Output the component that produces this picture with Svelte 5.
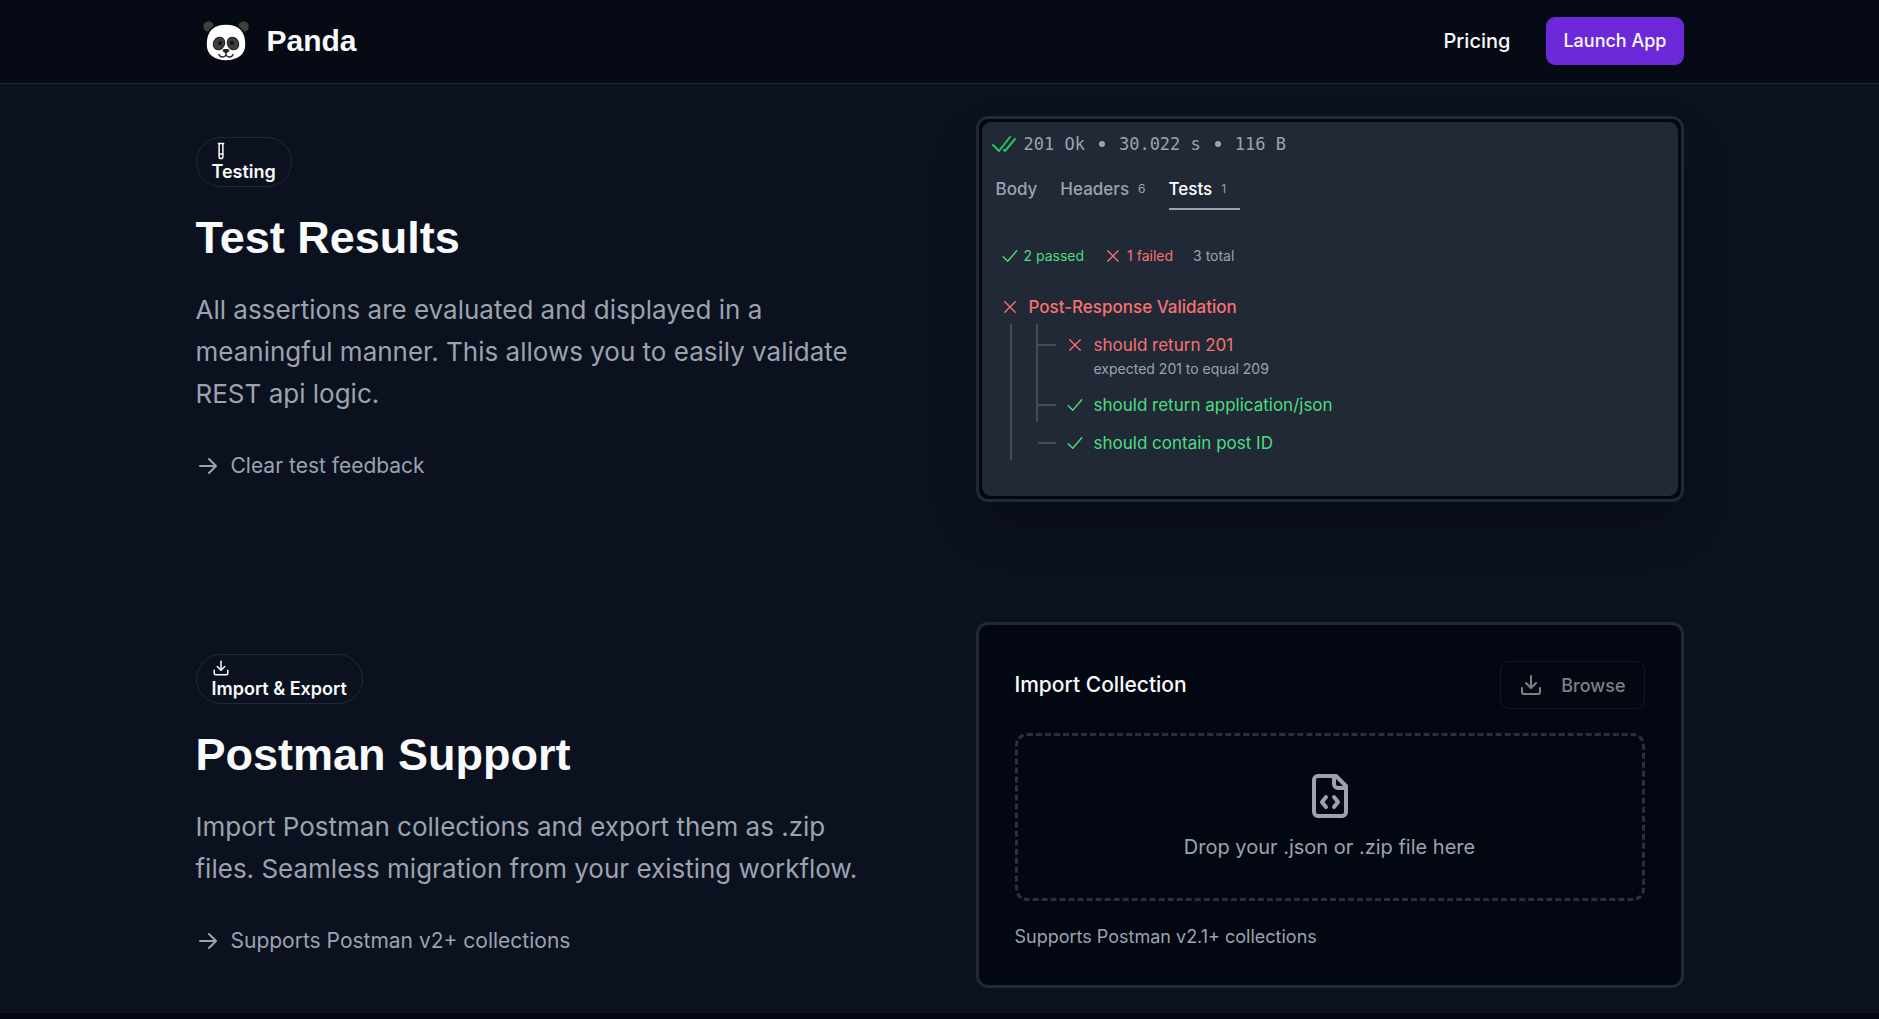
<script>
  const download = ['M12 15V3', 'M7 10l5 5 5-5', 'M21 15v4a2 2 0 0 1-2 2H5a2 2 0 0 1-2-2v-4'];
  const testTube = ['M14.5 2v17.5c0 1.4-1.1 2.5-2.5 2.5s-2.5-1.1-2.5-2.5V2', 'M8.5 2h7', 'M14.5 16h-5'];
  const check = ['M3 13l6 6L21 5'];
  const cross = ['M19 5 5 19', 'M5 5l14 14'];
</script>

{#snippet icon(paths, cls)}
  <svg class="icon {cls}" viewBox="0 0 24 24" aria-hidden="true">
    {#each paths as d}<path {d} />{/each}
  </svg>
{/snippet}

{#snippet copy(iconPaths, tag, title, text, note)}
  <div class="copy">
    <div class="pill">{@render icon(iconPaths, 'i18')}<span>{tag}</span></div>
    <h2>{title}</h2>
    <p class="lead">{text}</p>
    <p class="note">
      {@render icon(['M4 12h15', 'M13 5l7 7-7 7'], 'i24')}
      {note}
    </p>
  </div>
{/snippet}

<header>
  <div class="wrap bar">
    <a class="brand" href="/">
      <svg class="panda" viewBox="0 0 48 42" aria-hidden="true">
        <circle cx="6.500" cy="6.500" r="6" fill="#3f3f3f" stroke="#0a0a0a" stroke-width="1.500" />
        <circle cx="41.500" cy="6.500" r="6" fill="#3f3f3f" stroke="#0a0a0a" stroke-width="1.500" />
        <path d="M24 4C11 4 4 11 4 24.500 4 35 12 41 24 41s20-6 20-16.500C44 11 37 4 24 4z" fill="#fff" stroke="#0a0a0a" stroke-width="1.500" />
        <ellipse cx="17" cy="23.500" rx="5.500" ry="6.500" fill="#3f3f3f" stroke="#1c1c1c" transform="rotate(30 17 23.500)" />
        <ellipse cx="31" cy="23.500" rx="5.500" ry="6.500" fill="#3f3f3f" stroke="#1c1c1c" transform="rotate(-30 31 23.500)" />
        <circle cx="18" cy="23" r="2" fill="#111" />
        <circle cx="30" cy="23" r="2" fill="#111" />
        <path d="M20.500 30c1-1.200 6-1.200 7 0 0 1.500-2 3-3.500 3s-3.500-1.500-3.500-3z" fill="#222" />
        <path d="M24 32v2.500M17 34.500c1 3 5.500 3.500 7 .5 1.500 3 6 2.500 7-.5" fill="none" stroke="#222" stroke-width="1.500" stroke-linecap="round" />
      </svg>
      Panda
    </a>
    <nav>
      <a class="pricing" href="/pricing">Pricing</a>
      <button class="launch" type="button">Launch App</button>
    </nav>
  </div>
</header>

<main>
  <section class="wrap feature">
    {@render copy(testTube, 'Testing', 'Test Results', 'All assertions are evaluated and displayed in a meaningful manner. This allows you to easily validate REST api logic.', 'Clear test feedback')}
    <div class="card framed">
      <div class="response">
        <div class="status">
          {@render icon(['M1 13l6 6L18 5', 'M12 18l1 1L23 7'], 'i24 ok')}
          <span>201 Ok</span><i class="dot"></i><span>30.022 s</span><i class="dot"></i><span>116 B</span>
        </div>
        <div class="tabs" role="tablist">
          <button type="button" role="tab" aria-selected="false">Body</button>
          <button type="button" role="tab" aria-selected="false">Headers <small>6</small></button>
          <button type="button" role="tab" aria-selected="true" class="active">Tests <small>1</small></button>
        </div>
        <div class="summary">
          <span class="pass">{@render icon(check, 'i18 fine')}2 passed</span>
          <span class="fail">{@render icon(cross, 'i18 fine')}1 failed</span>
          <span>3 total</span>
        </div>
        <div class="group fail">{@render icon(cross, 'i18 fine')}Post-Response Validation</div>
        <ul class="tree">
          <li class="rail tall">
            <div class="test fail">{@render icon(cross, 'i18 fine')}should return 201</div>
            <div class="why">expected 201 to equal 209</div>
          </li>
          <li class="rail"><div class="test pass">{@render icon(check, 'i18 fine')}should return application/json</div></li>
          <li><div class="test pass">{@render icon(check, 'i18 fine')}should contain post ID</div></li>
        </ul>
      </div>
    </div>
  </section>

  <section class="wrap feature second">
    {@render copy(download, 'Import & Export', 'Postman Support', 'Import Postman collections and export them as .zip files. Seamless migration from your existing workflow.', 'Supports Postman v2+ collections')}
    <div class="card import">
      <div class="import-head">
        <h3>Import Collection</h3>
        <button class="browse" type="button" disabled>{@render icon(download, 'i24')}Browse</button>
      </div>
      <div class="drop">
        {@render icon(['M10 12.500 8 15l2 2.500', 'M14 12.500l2 2.500-2 2.500', 'M14 2v4a2 2 0 0 0 2 2h4', 'M15 2H6a2 2 0 0 0-2 2v16a2 2 0 0 0 2 2h12a2 2 0 0 0 2-2V7z'], 'i48')}
        <span>Drop your .json or .zip file here</span>
      </div>
      <p class="support">Supports Postman v2.1+ collections</p>
    </div>
  </section>
</main>

<style>
  :global(body) {
    margin: 0;
    background: #030712;
    overflow: hidden;
  }
  header, main {
    font-family: Inter, 'Liberation Sans', sans-serif;
    color: #f9fafb;
  }
  * { box-sizing: border-box; }
  h2, h3, p, ul { margin: 0; padding: 0; }
  button { font: inherit; color: inherit; background: none; border: 0; padding: 0; }
  a { color: inherit; text-decoration: none; }
  .wrap { width: 100%; max-width: 1488px; margin: 0 auto; }
  .icon { fill: none; stroke: currentColor; stroke-width: 2; stroke-linecap: round; stroke-linejoin: round; flex: none; display: block; }
  .i18 { width: 18px; height: 18px; }
  .i24 { width: 24px; height: 24px; }
  .i48 { width: 48px; height: 48px; }

  header { background: #050a15; border-bottom: 1px solid #1f2937; }
  .bar { height: 83px; padding-bottom: 2px; display: flex; align-items: center; justify-content: space-between; }
  .brand { display: flex; align-items: center; gap: 17px; padding-left: 6px; font: 700 30px/36px 'Liberation Sans', Arial, sans-serif; }
  .panda { width: 48px; height: 42px; overflow: visible; }
  nav { display: flex; align-items: center; gap: 36px; }
  .pricing { font-size: 20px; font-weight: 500; }
  .launch { height: 48px; padding: 0 17px; border-radius: 9px; background: #6d28d9; font-size: 18px; font-weight: 500; }

  main { background: #0b111e; padding: 32px 0 25px; }
  .feature { display: grid; grid-template-columns: 1fr 1fr; gap: 72px; align-items: center; }
  .second { margin-top: 120px; }
  .pill { display: inline-flex; flex-direction: column; border: 1px solid #1f2937; border-radius: 25px; padding: 4px 15px 3px; height: 50px; font-size: 18px; line-height: 24px; font-weight: 600; }
  h2 { margin-top: 18px; font: 700 45px/66px 'Liberation Sans', Arial, sans-serif; }
  .lead { margin-top: 18px; max-width: 684px; font-size: 26px; line-height: 42px; color: #9ca3af; }
  .note { margin-top: 36px; display: flex; align-items: center; gap: 11px; font-size: 21px; line-height: 30px; color: #9ca3af; }
  .card { border: 3px solid #1f2937; border-radius: 12px; background: #030712; }
  .framed { padding: 3px; box-shadow: 0 25px 50px -12px #0000004d; }
  .response { background: #212936; border-radius: 9px; height: 374px; padding: 10px 10px 0; color: #9ca3af; }
  .status { display: flex; align-items: center; gap: 14px; height: 24px; font: 17px/24px 'DejaVu Sans Mono', monospace; }
  .dot { width: 6px; height: 6px; border-radius: 50%; background: currentColor; }
  .ok { color: #22c55e; margin-right: -6px; }
  .fine { stroke-width: 1.8; }
  .tabs { display: flex; gap: 23px; margin: 20px 0 0 4px; height: 34px; font-size: 17px; font-weight: 500; }
  .tabs button { display: flex; align-items: flex-start; gap: 9px; line-height: 26px; border-bottom: 2px solid transparent; }
  .tabs small { font-size: 12px; font-weight: 400; }
  .tabs .active { color: #fff; border-color: #9ca3af; padding-right: 14px; }
  .tabs .active small { color: #9ca3af; }
  .summary { display: flex; gap: 20px; margin: 34px 0 0 9px; font-size: 14px; line-height: 24px; }
  .summary span { display: flex; align-items: center; gap: 5px; }
  .pass { color: #4ade80; }
  .fail { color: #f87171; }
  .group { display: flex; align-items: center; gap: 10px; margin: 26px 0 0 9px; font-size: 17px; line-height: 26px; font-weight: 500; }
  .tree { list-style: none; margin: 4px 0 0 18px; border-left: 2px solid #434b58; padding: 0 0 0 24px; }
  .tree li { height: 38px; padding-top: 8px; border-left: 2px solid transparent; }
  .tree .tall { height: 60px; }
  .tree .rail { border-color: #434b58; }
  .test { display: flex; align-items: center; gap: 10px; font-size: 17px; line-height: 26px; }
  .test::before { content: ''; width: 18px; height: 2px; background: #434b58; }
  .why { padding-left: 56px; font-size: 14px; line-height: 22px; color: #9ca3af; }

  .import { padding: 36px; }
  .import-head { display: flex; align-items: center; justify-content: space-between; }
  h3 { font-size: 21px; line-height: 30px; font-weight: 500; }
  .browse { display: flex; align-items: center; gap: 18px; height: 48px; padding: 0 18px; border: 1px solid #111827; border-radius: 9px; color: #7e8084; font-size: 18px; font-weight: 500; }
  .drop { margin-top: 24px; height: 168px; border: 3px dashed #2b303b; border-radius: 12px; display: flex; flex-direction: column; align-items: center; padding-top: 36px; gap: 12px; color: #9ca3af; font-size: 20px; line-height: 30px; }
  .support { margin-top: 24px; font-size: 18px; line-height: 24px; color: #9ca3af; }
</style>
